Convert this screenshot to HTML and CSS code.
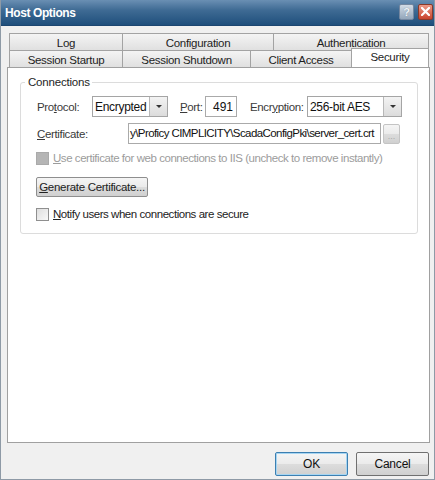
FILE: index.html
```html
<!DOCTYPE html>
<html>
<head>
<meta charset="utf-8">
<link rel="stylesheet" href="styles.css">
</head>
<body>
<div class="window">
  <div class="titlebar">
    <span class="title">Host Options</span>
    <div class="tbtns">
      <span class="tbtn help">?</span>
      <span class="tbtn close">
        <svg width="9" height="9" viewBox="0 0 9 9"><path d="M1 1 L8 8 M8 1 L1 8" stroke="#fff" stroke-width="2.2" stroke-linecap="square"/></svg>
      </span>
    </div>
  </div>
  <div class="body">
    <div class="tabs">
      <div class="tabrow back">
        <div class="tab w1">Log</div>
        <div class="tab w2">Configuration</div>
        <div class="tab w3">Authentication</div>
      </div>
      <div class="tabrow front">
        <div class="tab f1">Session Startup</div>
        <div class="tab f2">Session Shutdown</div>
        <div class="tab f3">Client Access</div>
        <div class="tab f4 sel">Security</div>
      </div>
    </div>
    <div class="panel">
      <fieldset class="group">
        <legend>Connections</legend>
        <div class="row r1">
          <span class="lbl l-proto">Pro<u>t</u>ocol:</span>
          <div class="combo c-proto"><span class="cval">Encrypted</span><span class="carrow"><i></i></span></div>
          <span class="lbl l-port"><u>P</u>ort:</span>
          <div class="input i-port">491</div>
          <span class="lbl l-enc">Encr<u>y</u>ption:</span>
          <div class="combo c-enc"><span class="cval">256-bit AES</span><span class="carrow"><i></i></span></div>
        </div>
        <div class="row r2">
          <span class="lbl l-cert"><u>C</u>ertificate:</span>
          <div class="input i-cert">y\Proficy CIMPLICITY\ScadaConfigPki\server_cert.crt</div>
          <div class="btn dots">...</div>
        </div>
        <div class="row r3 disabled">
          <span class="chk dis"></span>
          <span class="ctext"><u>U</u>se certificate for web connections to IIS (uncheck to remove instantly)</span>
        </div>
        <div class="row r4">
          <div class="btn gen"><u>G</u>enerate Certificate...</div>
        </div>
        <div class="row r5">
          <span class="chk"></span>
          <span class="ctext"><u>N</u>otify users when connections are secure</span>
        </div>
      </fieldset>
    </div>
    <div class="footer">
      <div class="btn big ok">OK</div>
      <div class="btn big">Cancel</div>
    </div>
  </div>
</div>
</body>
</html>
```
FILE: styles.css
```css
* { box-sizing: border-box; }
html, body { margin: 0; padding: 0; background: #fff; }
body { font-family: "Liberation Sans", Arial, sans-serif; font-size: 11px; color: #1a1a1a; }
u { text-decoration: underline; text-underline-offset: 1px; }

.window {
  width: 435px; height: 480px;
  background: #f0f0f0;
  border: 1px solid #8e9aa6;
  border-top: none;
  display: flex; flex-direction: column;
}
.titlebar {
  height: 26px;
  background: linear-gradient(#6a8fb3 0%, #3f6b94 40%, #1f4f7c 100%);
  display: flex; align-items: center; justify-content: space-between;
  padding: 0 1px 0 4px;
  border-bottom: 1px solid #1c4670;
}
.title { color: #fff; font-weight: bold; font-size: 12px; letter-spacing: -0.4px; padding-top: 1px; }
.tbtns { display: flex; gap: 4px; margin-top: -2px; }
.tbtn { width: 15px; height: 16px; border-radius: 2px; display: flex; align-items: center; justify-content: center; }
.help { background: linear-gradient(#d2dbe5, #93a6ba); border: 1px solid #7487a0; color: #eef2f6; font-weight: bold; font-size: 11px; text-shadow: 0 0 1px #6a7d92; }
.close { background: linear-gradient(#ec9a88, #c9442c); border: 1px solid #8a3a2a; }

.body { flex: 1; display: flex; flex-direction: column; padding: 7px 4px 0 6px; }
.tabs { display: flex; flex-direction: column; }
.tabrow { display: flex; height: 17px; margin-left: 2px; margin-right: 1px; }
.tabrow.front { position: relative; z-index: 1; }
.tab {
  border: 1px solid #a3a3a3; border-bottom: none; border-left: none;
  background: linear-gradient(#f4f4f4, #e0e0e0);
  display: flex; align-items: center; justify-content: center;
  font-size: 11.5px; color: #1e1e1e; letter-spacing: -0.3px;
  padding-top: 1px; white-space: nowrap;
}
.tab:first-child { border-left: 1px solid #a3a3a3; }
.w1 { width: 114px; }
.w2 { width: 151px; }
.w3 { flex: 1; }
.f1 { width: 114px; }
.f2 { width: 128px; }
.f3 { width: 101px; }
.f4 { flex: 1; }
.tab.sel { background: #fff; height: 19px; margin-top: -2px; border-left: 1px solid #a3a3a3; margin-left: -1px; padding-top: 0; padding-bottom: 2px; }

.panel {
  height: 376px;
  background: #fff;
  border: 1px solid #a0a0a0;
  padding: 8px 11px 0 12px;
}
.group {
  margin: 0; border: 1px solid #dcdcdc; border-radius: 3px;
  padding: 0; height: 158px;
  display: block;
}
.group legend { padding: 0 2px 0 3px; margin-left: 4px; font-size: 11.5px; color: #1e1e1e; letter-spacing: -0.2px; }
.row { display: flex; align-items: center; }
.r1 { margin-top: 8px; height: 21px; }
.lbl { color: #3a3a3a; font-size: 11.5px; letter-spacing: -0.35px; white-space: nowrap; }
.l-proto { margin-left: 16px; width: 55px; }
.combo { height: 21px; border: 1px solid #a5a5a5; display: flex; background: #fff; }
.cval { flex: 1; padding: 3px 0 0 2px; color: #111; font-size: 12px; letter-spacing: -0.3px; white-space: nowrap; }
.carrow { width: 18px; background: linear-gradient(#f3f3f3, #dcdcdc); border-left: 1px solid #b8b8b8; display: flex; align-items: center; justify-content: center; }
.carrow i { width: 0; height: 0; border-left: 3px solid transparent; border-right: 3px solid transparent; border-top: 3px solid #333; }
.c-proto { width: 76px; }
.l-port { margin-left: 12px; width: 25px; }
.input { height: 21px; border: 1px solid #aaa; background: #fff; padding: 2px 0 0 3px; color: #111; font-size: 12px; white-space: nowrap; overflow: hidden; }
.i-port { width: 32px; text-align: right; padding-right: 3px; padding-top: 3px; }
.l-enc { margin-left: 13px; width: 57px; }
.c-enc { width: 95px; }
.r2 { margin-top: 6px; height: 21px; }
.l-cert { margin-left: 16px; width: 91px; }
.i-cert { width: 253px; padding: 3px 0 0 1px; font-size: 11.5px; letter-spacing: -0.58px; }
.btn {
  border: 1px solid #8d8d8d; border-radius: 2px;
  background: linear-gradient(#f5f5f5 0%, #ebebeb 48%, #dcdcdc 52%, #d0d0d0 100%);
  display: flex; align-items: center; justify-content: center;
  white-space: nowrap;
}
.dots { width: 17px; height: 20px; margin-left: 2px; color: #aaa; font-size: 9px; border-color: #c4c4c4; padding-top: 4px; }
.r3 { margin-top: 6px; height: 16px; }
.chk { width: 13px; height: 13px; border: 1px solid #8f8f8f; margin-left: 15px; background: linear-gradient(135deg, #dedede, #f8f8f8); flex-shrink: 0; }
.chk.dis { background: #b5b5b5; border-color: #aaa; }
.ctext { margin-left: 4px; font-size: 11.5px; white-space: nowrap; }
.disabled .ctext { color: #9c9c9c; letter-spacing: -0.45px; }
.r4 { margin-top: 11px; }
.gen { margin-left: 15px; width: 112px; height: 20px; color: #222; border-color: #8e8e8e; font-size: 11.5px; letter-spacing: -0.3px; }
.r5 { margin-top: 9px; height: 16px; }
.r5 .ctext { color: #222; letter-spacing: -0.45px; }

.footer { display: flex; justify-content: flex-end; gap: 8px; padding: 9px 1px 0 0; }
.big { width: 73px; height: 24px; font-size: 12px; color: #111; border-color: #707070; letter-spacing: -0.2px; }
.ok { border-color: #3c7fb1; box-shadow: inset 0 0 0 1px #a6d5f2; }
```
